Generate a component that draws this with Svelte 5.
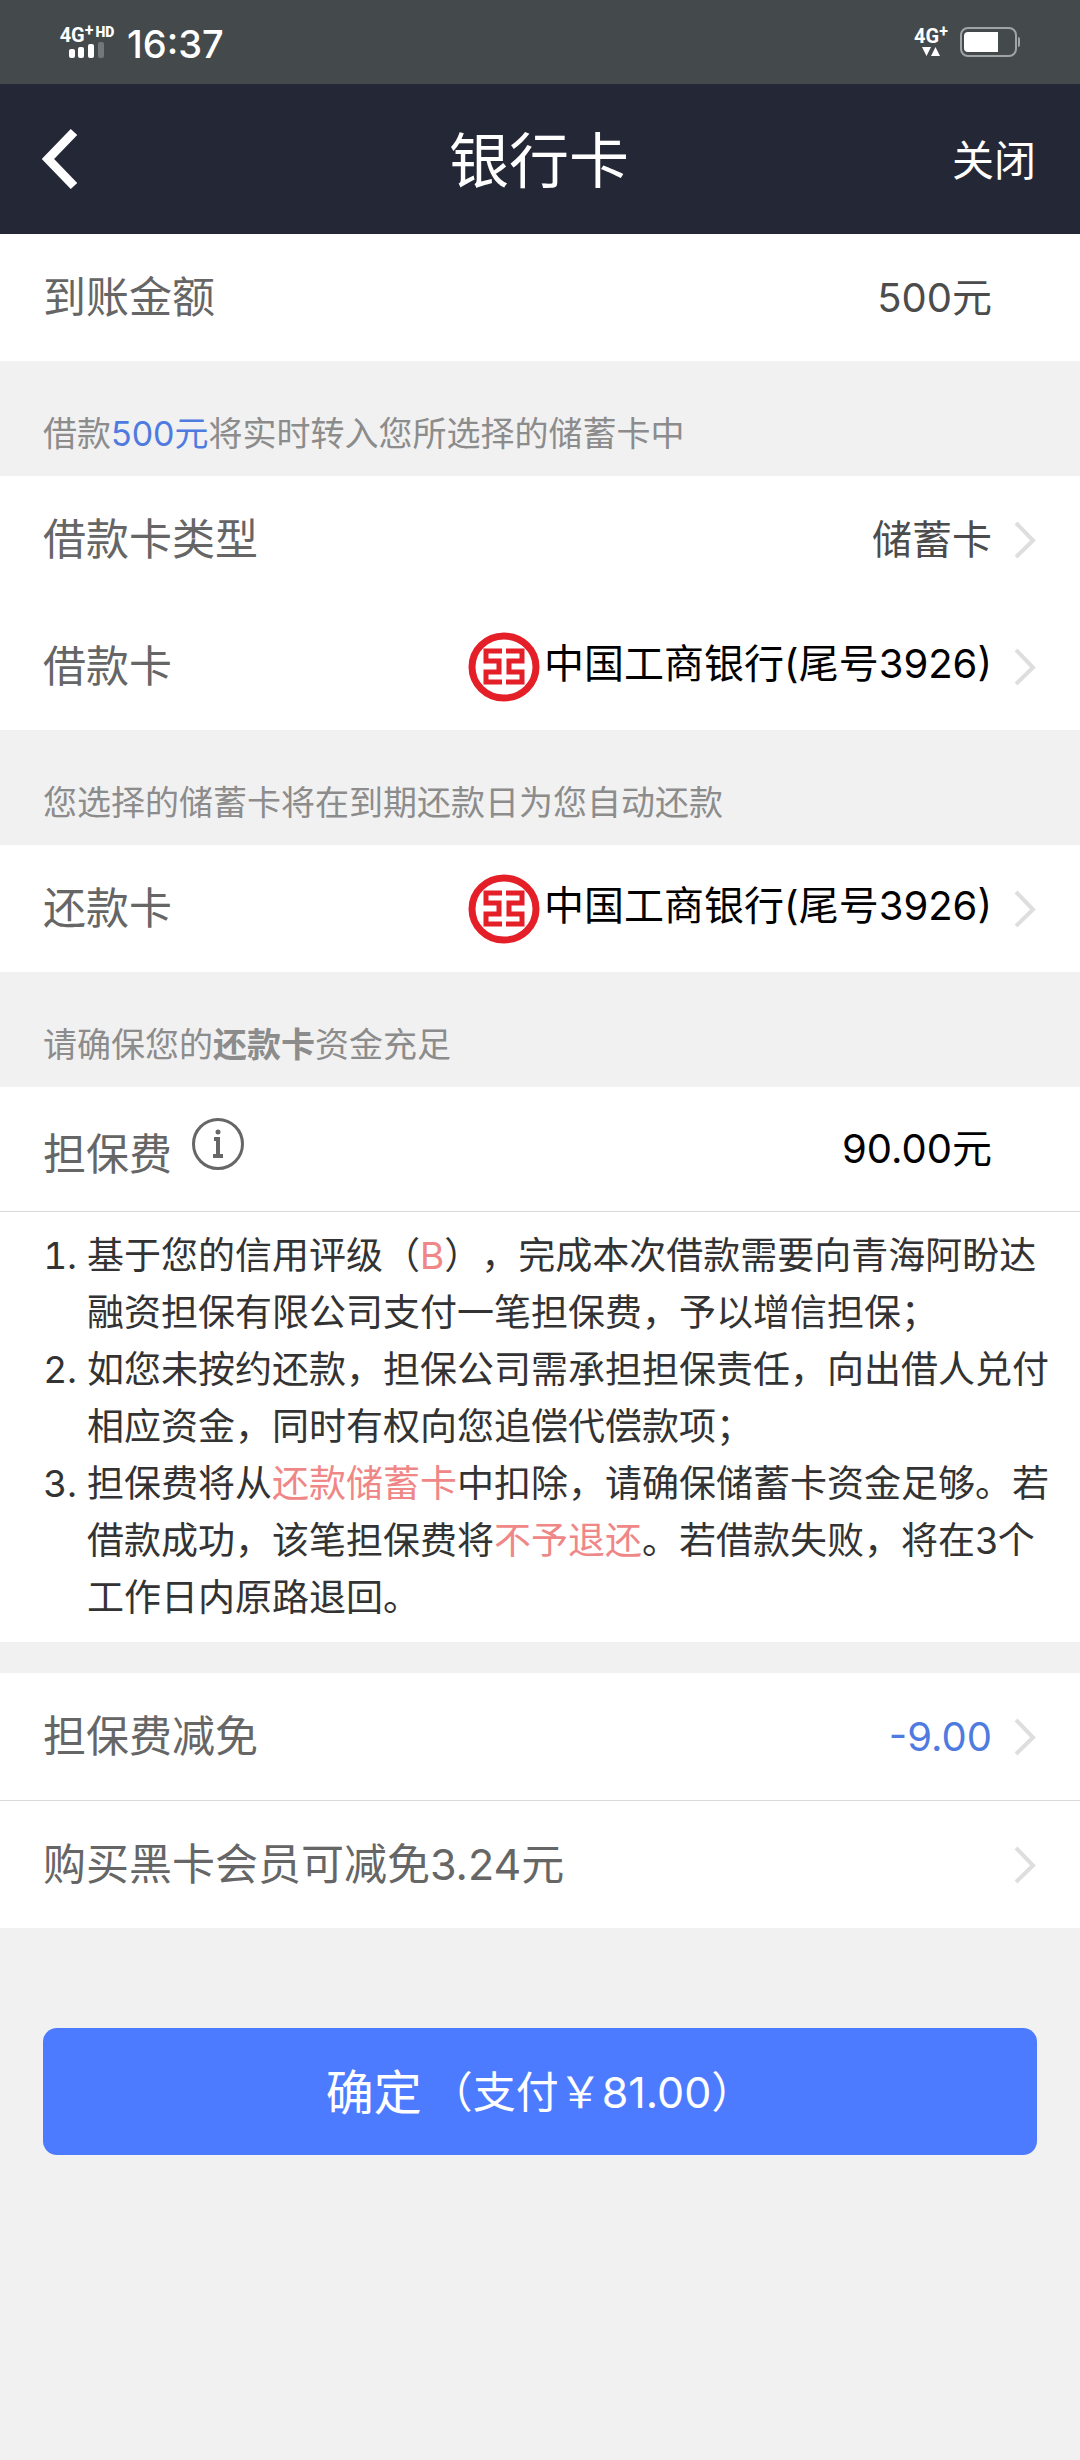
<script lang="ts">
  const bank = '中国工商银行(尾号3926)'
  const amount = '500元'
</script>

{#snippet chevron()}
  <svg class="chevron" viewBox="0 0 22 38" aria-hidden="true">
    <path d="M2 2 19 19.500 2 36" fill="none" stroke="#dedede" stroke-width="4" />
  </svg>
{/snippet}

{#snippet bankCard()}
  <span class="bank">
    <svg class="bank__logo" viewBox="0 0 72 70" aria-hidden="true">
      <ellipse cx="36" cy="35" rx="32" ry="31" fill="none" stroke="#e41f28" stroke-width="7" />
      <path
        d="M34 19H18V29H31V40H18V50H34 M38 19H54V29H41V40H54V50H38"
        fill="none"
        stroke="#e41f28"
        stroke-width="5"
      />
    </svg>
    <span class="bank__name">{bank}</span>
  </span>
{/snippet}

<div class="page" lang="zh-CN">
  <div class="status">
    <div class="signal">
      <div class="net">4G<span class="net__plus">+</span><span class="net__hd">HD</span></div>
      <svg class="bars" viewBox="0 0 36 16" aria-hidden="true">
        <rect x="0" y="7" width="6" height="9" rx="2" fill="#fff" />
        <rect x="9" y="5" width="6" height="11" rx="2" fill="#fff" />
        <rect x="19" y="2" width="6" height="14" rx="2" fill="#fff" />
        <rect x="29" y="0" width="6" height="16" rx="2" fill="#72777a" />
      </svg>
    </div>
    <time class="clock">16:37</time>
    <div class="signal signal--data">
      <div class="net">4G<span class="net__plus">+</span></div>
      <svg class="arrows" viewBox="0 0 18 10" aria-hidden="true">
        <path d="M0 0H9L4.500 9Z M9 9H18L13.500 0Z" fill="#fff" />
      </svg>
    </div>
    <svg class="battery" viewBox="0 0 61 30" aria-hidden="true">
      <rect x="1" y="1" width="55" height="28" rx="7" fill="none" stroke="#a0a4a6" stroke-width="2" />
      <path d="M8 5H38V25H8Q4 25 4 21V9Q4 5 8 5Z" fill="#fff" />
      <path d="M58 10Q60 10 60 12V18Q60 20 58 20Z" fill="#a0a4a6" />
    </svg>
  </div>

  <header class="nav">
    <button class="nav__back" aria-label="返回">
      <svg viewBox="0 0 38 62" aria-hidden="true">
        <path d="M32 4 6 31 32 58" fill="none" stroke="#fff" stroke-width="9" />
      </svg>
    </button>
    <h1>银行卡</h1>
    <button class="nav__close">关闭</button>
  </header>

  <main>
    <div class="row">
      <span class="label">到账金额</span>
      <span class="value">{amount}</span>
    </div>

    <p class="note">借款<span class="blue">{amount}</span>将实时转入您所选择的储蓄卡中</p>

    <button class="row">
      <span class="label">借款卡类型</span>
      <span class="value">储蓄卡</span>
      {@render chevron()}
    </button>
    <button class="row">
      <span class="label">借款卡</span>
      {@render bankCard()}
      {@render chevron()}
    </button>

    <p class="note">您选择的储蓄卡将在到期还款日为您自动还款</p>

    <button class="row">
      <span class="label">还款卡</span>
      {@render bankCard()}
      {@render chevron()}
    </button>

    <p class="note">请确保您的<strong>还款卡</strong>资金充足</p>

    <div class="row row--fee">
      <div class="label label--info">
        担保费
        <button class="info" aria-label="担保费说明">
          <svg viewBox="0 0 52 52" aria-hidden="true">
            <circle cx="26" cy="26" r="24.500" fill="none" stroke="#666" stroke-width="3" />
            <circle cx="26" cy="14" r="2.500" fill="#666" />
            <path d="M22 21H26V38 M21 38H31" fill="none" stroke="#666" stroke-width="4" />
          </svg>
        </button>
      </div>
      <span class="value value--dark">90.00元</span>
    </div>

    <ol class="terms">
      <li>
        基于您的信用评级（<em>B</em>），完成本次借款需要向青海阿盼达融资担保有限公司支付一笔担保费，予以增信担保；
      </li>
      <li>如您未按约还款，担保公司需承担担保责任，向出借人兑付相应资金，同时有权向您追偿代偿款项；</li>
      <li>
        担保费将从<em>还款储蓄卡</em>中扣除，请确保储蓄卡资金足够。若借款成功，该笔担保费将<em>不予退还</em>。若借款失败，将在3个工作日内原路退回。
      </li>
    </ol>

    <section class="discounts">
      <button class="row row--line">
        <span class="label">担保费减免</span>
        <span class="value blue">-9.00</span>
        {@render chevron()}
      </button>
      <button class="row">
        <span class="label">购买黑卡会员可减免3.24元</span>
        {@render chevron()}
      </button>
    </section>

    <button class="submit">确定<span class="submit__sum">（支付￥81.00）</span></button>
  </main>
</div>

<style>
  :global(body) {
    margin: 0;
    background: #f1f1f1;
  }
  .page {
    min-height: 100vh;
    background: #f1f1f1;
    color: #333;
    font-family: Inter, 'Noto Sans CJK SC', sans-serif;
    text-spacing-trim: space-all;
  }
  button {
    border: none;
    margin: 0;
    padding: 0;
    background: none;
    color: inherit;
    font-family: inherit;
    text-align: left;
    cursor: pointer;
  }
  svg {
    display: block;
    flex: none;
  }

  .status {
    display: flex;
    align-items: center;
    box-sizing: border-box;
    height: 84px;
    padding: 0 59px;
    background: #44494c;
    color: #fff;
  }
  .signal {
    display: flex;
    flex-direction: column;
    align-items: center;
    width: 56px;
  }
  .net {
    display: flex;
    align-items: flex-start;
    height: 16px;
    font-family: Roboto, sans-serif;
    font-size: 20px;
    font-weight: 700;
    line-height: 18px;
  }
  .net__plus {
    font-size: 16px;
    line-height: 10px;
  }
  .net__hd {
    margin-left: 2px;
    font-size: 14px;
    font-weight: 900;
    line-height: 12px;
  }
  .bars {
    width: 36px;
    height: 16px;
  }
  .signal--data {
    width: 34px;
    margin-left: auto;
    gap: 4px;
  }
  .arrows {
    width: 18px;
    height: 10px;
  }
  .clock {
    margin-left: 12px;
    padding-top: 4px;
    font-size: 38px;
    font-weight: 500;
    line-height: 48px;
  }
  .battery {
    width: 61px;
    height: 30px;
    margin-left: 12px;
  }

  .nav {
    display: grid;
    grid-template-columns: 1fr auto 1fr;
    align-items: center;
    height: 150px;
    padding: 0 44px 0 42px;
    background: #242736;
    color: #fff;
  }
  .nav__back {
    justify-self: start;
  }
  .nav__back svg {
    width: 38px;
    height: 62px;
  }
  .nav h1 {
    margin: 0;
    padding-top: 4px;
    font-size: 60px;
    font-weight: 400;
    line-height: 80px;
  }
  .nav__close {
    justify-self: end;
    padding-top: 4px;
    font-size: 42px;
    line-height: 60px;
  }

  .row {
    display: flex;
    align-items: center;
    box-sizing: border-box;
    width: 100%;
    min-height: 127px;
    padding: 0 44px 0 43px;
    background: #fff;
  }
  .label {
    margin-right: auto;
    color: #666;
    font-size: 43px;
    line-height: 63px;
  }
  .value {
    color: #4c4c4c;
    font-size: 40px;
    line-height: 60px;
  }
  div.row {
    padding-right: 88px;
  }
  .value--dark {
    color: #000;
  }
  .blue {
    color: #4f7be0;
  }
  .chevron {
    width: 22px;
    height: 38px;
    margin-left: 22px;
  }
  .bank {
    display: flex;
    align-items: center;
    gap: 4px;
  }
  .bank__logo {
    width: 72px;
    height: 70px;
  }
  .bank__name {
    padding-bottom: 6px;
    color: #000;
    font-size: 40px;
    line-height: 60px;
  }

  .note {
    margin: 0;
    padding: 43px 43px 12px;
    color: #8c8c8c;
    font-size: 34px;
    line-height: 60px;
  }

  .row--fee {
    min-height: 125px;
    border-bottom: 1px solid #d9d9d9;
  }
  .label--info {
    display: flex;
    align-items: baseline;
    gap: 20px;
    padding-top: 6px;
  }
  .info svg {
    width: 52px;
    height: 52px;
  }

  .terms {
    margin: 0;
    padding: 15px 13px 16px 87px;
    background: #fff;
    font-size: 37px;
    line-height: 57px;
  }
  .terms em {
    color: #f08787;
    font-style: normal;
  }

  .discounts {
    margin-top: 31px;
  }
  .row--line {
    min-height: 128px;
    border-bottom: 1px solid #d9d9d9;
  }

  .submit {
    display: flex;
    align-items: center;
    justify-content: center;
    width: calc(100% - 86px);
    height: 127px;
    margin: 100px 43px 0;
    padding-bottom: 6px;
    border-radius: 14px;
    background: #4d7bff;
    color: #fff;
    font-size: 48px;
  }
  .submit__sum {
    margin-left: 8px;
    font-size: 43px;
  }
</style>
